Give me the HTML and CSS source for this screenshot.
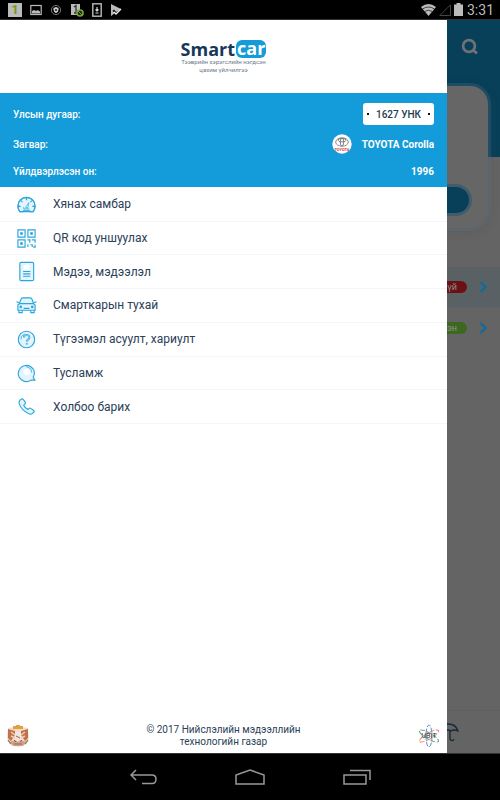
FILE: index.html
```html
<!DOCTYPE html>
<html lang="mn">
<head>
  <meta charset="UTF-8" />
  <meta name="viewport" content="width=device-width, initial-scale=1" />
  <title>Smartcar</title>
  <link rel="stylesheet" href="styles.css">
</head>
<body>
  <header class="status-bar">
    <div class="status-group">
      <span class="status-one">1</span>
      <svg width="12" height="12" viewBox="0 0 12 12"><rect x=".8" y="1.5" width="10.4" height="9" fill="none" stroke="#bbb" stroke-width="1.2"/><path d="M2 9.500V7l2-1 2 1 1.500-1L10 7.500v2z" fill="#bbb"/></svg>
      <svg width="12" height="12" viewBox="0 0 12 12"><circle cx="6" cy="6" r="4.600" fill="none" stroke="#777" stroke-width="1"/><path d="M6 3l2.500 1v2Q8.500 8 6 9.300 3.500 8 3.500 6V4z" fill="#ccc"/><circle cx="6" cy="6" r="1" fill="#111"/></svg>
      <svg width="14" height="14" viewBox="0 0 14 14"><rect x="1" y="1" width="9" height="11" fill="#bbb"/><path d="M4 4l2-1.500V10M4 10h4" fill="none" stroke="#333" stroke-width="1.300"/><circle cx="10" cy="10" r="3" fill="#222" stroke="#78a72c" stroke-width="1.600"/><path d="M8 8l4 4" stroke="#78a72c"/></svg>
      <svg width="10" height="14" viewBox="0 0 10 14"><rect x=".8" y=".8" width="8.400" height="12.400" fill="none" stroke="#bbb" stroke-width="1.400"/><path d="M5 4v4M3.500 6.500L5 8l1.500-1.500M3.500 10h3" fill="none" stroke="#ddd" stroke-width="1.100"/></svg>
      <svg width="12" height="14" viewBox="0 0 12 14"><path d="M1 1l10 5-2 1.500L6 9 4 6.500 2.500 8 5 10l-4 3z" fill="#bbb"/><path d="M4 9l2 2 5-5" fill="none" stroke="#eee" stroke-width="1.300"/></svg>
    </div>
    <div class="status-group status-right">
      <svg width="15" height="12" viewBox="0 0 15 12"><path d="M0 3Q7.500-3 15 3L7.500 12z" fill="#bbb"/><path d="M1.500 5Q7.500 1 13.500 5M3.500 7.500Q7.500 5 11.500 7.500" fill="none" stroke="#222" stroke-width=".8"/></svg>
      <svg width="12" height="12" viewBox="0 0 12 12"><path d="M11.500.8v10.700H.8z" fill="none" stroke="#444"/></svg>
      <svg width="9" height="13" viewBox="0 0 9 13"><path d="M2.500 0h4v1.500H9V13H0V1.500h2.500z" fill="#bbb"/></svg>
      <span class="clock">3:31</span>
    </div>
  </header>

  <div class="screen">
    <!-- dimmed page behind the drawer -->
    <main class="page">
      <section class="page-top">
        <button class="search" aria-label="Хайх">
          <svg width="18" height="18" viewBox="0 0 18 18"><circle cx="8" cy="8" r="5.900" fill="none" stroke="#6f7375" stroke-width="2.700"/><path d="M11.500 11.500l4.500 4" stroke="#6f7375" stroke-width="2.800"/></svg>
        </button>
        <div class="page-card"><div class="page-pill"></div></div>
      </section>
      <section class="page-list">
        <div class="page-row tinted">
          <span class="badge red">үй</span>
          <svg width="8" height="12" viewBox="0 0 8 12"><path d="M1.500 1.200l5 4.800-5 4.800" fill="none" stroke="#106b98" stroke-width="2.400"/></svg>
        </div>
        <div class="page-row">
          <span class="badge green">эн</span>
          <svg width="8" height="12" viewBox="0 0 8 12"><path d="M1.500 1.200l5 4.800-5 4.800" fill="none" stroke="#106b98" stroke-width="2.400"/></svg>
        </div>
      </section>
      <footer class="page-tabs">
        <svg width="22" height="20" viewBox="0 0 22 20"><path d="M2 9Q3 2 11 2t10 7Q17 7 14 9q-3-2-6 0-3-2-6 0zM13 9v7q0 2.500 2 2.500T17 17" fill="none" stroke="#182a38" stroke-width="1.300"/></svg>
      </footer>
    </main>

    <aside class="drawer">
      <div class="brand">
        <div class="logo">Smart<span class="logo-car">car</span></div>
        <div class="slogan">Тээврийн хэрэгслийн нэгдсэн<br>цахим үйлчилгээ</div>
      </div>

      <dl class="vehicle">
        <div class="vehicle-row plate-row">
          <dt>Улсын дугаар:</dt>
          <dd class="plate">1627 УНК</dd>
        </div>
        <div class="vehicle-row model-row">
          <dt>Загвар:</dt>
          <dd class="model">
            <svg width="20" height="20" viewBox="0 0 20 20"><circle cx="10" cy="10" r="9.700" fill="#fff"/><g fill="none" stroke="#777" stroke-width=".9"><ellipse cx="10" cy="8" rx="6.300" ry="4.200"/><ellipse cx="10" cy="6.200" rx="4" ry="1.700"/><ellipse cx="10" cy="8" rx="1.700" ry="4"/></g><text class="maker" x="10" y="16.500" text-anchor="middle">TOYOTA</text></svg>
            TOYOTA Corolla
          </dd>
        </div>
        <div class="vehicle-row year-row">
          <dt>Үйлдвэрлэсэн он:</dt>
          <dd>1996</dd>
        </div>
      </dl>

      <nav class="menu">
        <a href="#">
          <svg class="icon" viewBox="0 0 22 22"><path d="M4 18.500Q2 16 2 12.500a9 9 0 0 1 18 0q0 3.500-2 6z" fill="#e4f4fc"/><path d="M4 18.500Q2 16 2 12.500a9 9 0 0 1 18 0q0 3.500-2 6h-3.500l-1-1.500h-5l-1 1.500zM11 4v2.500M5.200 7l1.600 1.500M16.800 7l-1.600 1.500M2.500 13H5M17 13h2.500"/><path d="M10 14l3.500-5-1 5.500zM8 13.500v2h6" stroke-width=".7"/></svg>
          Хянах самбар
        </a>
        <a href="#">
          <svg class="icon" viewBox="0 0 22 22"><path d="M2 2h7.500v7.500H2zM12.500 2H20v7.500h-7.500zM2 12.500h7.500V20H2z"/><path d="M5 5h1.500v1.500H5zM15.500 5H17v1.500h-1.500zM5 15.500h1.500V17H5z" fill="#119bd8"/><path d="M12 12.500h2.500v3M12.500 17v3M16.500 12.500H20v3M15 17.500h2V20M20 17.500V20h-2"/></svg>
          QR код уншуулах
        </a>
        <a href="#">
          <svg class="icon" viewBox="0 0 22 22"><rect x="4" y="1.500" width="14.500" height="19" rx="1.500" fill="#e4f4fc"/><path d="M8 4h6v5H8z" fill="#fff" stroke="none"/><path d="M7.500 11h7.500M7.500 13.500h7.500M7.500 16h7.500"/></svg>
          Мэдээ, мэдээлэл
        </a>
        <a href="#">
          <svg class="icon" viewBox="0 0 22 22"><path d="M3.500 9L5.200 4.500Q5.700 3 7 3h8q1.300 0 1.800 1.500L18.500 9l1.500 1.500V16H2v-5.500z" fill="#e4f4fc"/><path d="M3.500 9h15M3.500 8.200L.5 7M18.500 8.200l3-1.200M3 16v2.500h3.500V16M15.500 16v2.500H19V16M8 14h6"/><circle cx="5" cy="12.500" r=".8"/><circle cx="17" cy="12.500" r=".8"/></svg>
          Смарткарын тухай
        </a>
        <a href="#">
          <svg class="icon" viewBox="0 0 22 22"><circle cx="11" cy="11" r="8.600" fill="#e4f4fc"/><path d="M5 11a6 6 0 0 1 4-5.600" stroke-width=".8"/><path d="M8.300 9q0-2.800 2.900-2.800T14 9q0 1.500-1.500 2.200-1.200.6-1.200 2.200M11.300 15v1.300" stroke-width="2"/><path d="M8.300 9q0-2.800 2.900-2.800T14 9q0 1.500-1.500 2.200-1.200.6-1.200 2.200" stroke="#d5effb" stroke-width=".6"/></svg>
          Түгээмэл асуулт, хариулт
        </a>
        <a href="#">
          <svg class="icon" viewBox="0 0 22 22"><path d="M19.800 19h-4A8.500 8.500 0 1 1 19.300 11q0 3-1.300 5z" fill="#e4f4fc"/><circle cx="11" cy="10.500" r="3.200" fill="#fff" stroke="none"/><path d="M10.500 5a6 6 0 0 1 6 6" stroke-width=".9"/></svg>
          Тусламж
        </a>
        <a href="#">
          <svg class="icon" viewBox="0 0 22 22"><path d="M4 4.500l2-1.300q1-.5 1.700.5l2 3q.5 1-.4 1.800L8 9.700q1.300 2.700 4.300 4.500l1.500-1.200q.8-.6 1.600 0l3.200 2.200q.9.800.2 1.600L17 18.500q-1.300 1-4-.2Q6 15 3.500 8.500 2.500 6 4 4.500z" fill="#e4f4fc"/></svg>
          Холбоо барих
        </a>
      </nav>

      <footer class="drawer-footer">
        <svg width="24" height="24" viewBox="0 0 24 24">
          <path d="M2 4l7-1 3-2 3 2 7 1 1 10-4 7-7 2-7-2-4-7z" fill="#f0ddd0"/>
          <path d="M2 5l7 2v4l-4 6-3-3zM22 5l-7 2v4l4 6 3-3z" fill="#c4704a"/>
          <path d="M7 2h3v3H7zM14 2h3v3h-3zM10 1h4v4h-4z" fill="#e5a03a"/>
          <path d="M5 8l4 3M19 8l-4 3M5 12l4 2M19 12l-4 2" stroke="#e7d3b4" stroke-width="1.500"/>
          <path d="M9 8h6v6l-3 3-3-3z" fill="#eee7df"/>
          <path d="M4 18l5-2 3 2 3-2 5 2-3 4H7z" fill="#dd9890"/>
          <path d="M2 16l3 4M22 16l-3 4M8 20h8" stroke="#87915d" stroke-width="1.500"/>
          <path d="M10 12l4 2M8 16l2 2M16 16l-2 2" stroke="#b0574d"/>
        </svg>
        <p>© 2017 Нийслэлийн мэдээллийн<br>технологийн газар</p>
        <svg width="24" height="24" viewBox="0 0 24 24">
          <g fill="none" stroke-width="1" stroke-dasharray="5 1.500">
            <ellipse cx="12" cy="12" rx="3" ry="11" stroke="#638ec1"/>
            <ellipse cx="12" cy="12" rx="3" ry="11" transform="rotate(60 12 12)" stroke="#e58273"/>
            <ellipse cx="12" cy="12" rx="3" ry="11" transform="rotate(120 12 12)" stroke="#64a889"/>
          </g>
          <text class="ubit" x="12" y="14" text-anchor="middle">UBIT</text>
        </svg>
      </footer>
    </aside>
  </div>

  <div class="nav-bar">
    <button aria-label="Буцах"><svg width="28" height="16" viewBox="0 0 28 16"><path d="M7 1L2 6l5 5M2 6h21q4 0 4 4.300T23 14.500H13"/></svg></button>
    <button aria-label="Нүүр"><svg width="30" height="16" viewBox="0 0 30 16"><path d="M1 15V6l14-5 14 5v9z"/></svg></button>
    <button aria-label="Сүүлийн апп"><svg width="28" height="16" viewBox="0 0 28 16"><path d="M1 6h22v9H1zM7 1.500h20V11"/></svg></button>
  </div>
</body>
</html>
```

FILE: styles.css
```css
* {
  box-sizing: border-box;
}

body {
  margin: 0;
  height: 100vh;
  display: flex;
  flex-direction: column;
  overflow: hidden;
  background: #000;
  color: #2b4158;
  font-family: Roboto, "Noto Sans", sans-serif;
}

svg {
  display: block;
  flex: none;
}

button {
  padding: 0;
  border: none;
  background: none;
}

/* status bar */
.status-bar {
  height: 20px;
  padding: 0 6px 0 8px;
  display: flex;
  align-items: center;
  justify-content: space-between;
  border-bottom: 1px solid #333;
}

.status-group {
  display: flex;
  align-items: center;
  gap: 8px;
}

.status-right {
  gap: 3px;
}

.status-one {
  width: 14px;
  height: 14px;
  background: #bbb;
  color: #6c9a1b;
  font-size: 13px;
  line-height: 14px;
  font-weight: 700;
  text-align: center;
}

.clock {
  margin-left: 1px;
  color: #bbb;
  font-size: 14px;
  line-height: 18px;
}

.screen {
  flex: 1;
  position: relative;
}

/* page */
.page {
  height: 100%;
  display: flex;
  flex-direction: column;
  background: #646464;
}

.page-top {
  height: 247px;
  padding: 18px 12px 0;
  display: flex;
  flex-direction: column;
  align-items: flex-end;
  gap: 30px;
  background: linear-gradient(#083f59 137px, transparent 137px);
}

.search {
  margin-right: 9px;
}

.page-card {
  width: 100%;
  height: 142px;
  padding: 0 16px 12px;
  display: flex;
  align-items: flex-end;
  border-radius: 18px;
  background: #666;
  box-shadow: 0 0 0 3px rgba(80, 120, 145, .25), 0 2px 8px 3px rgba(70, 70, 70, .2);
}

.page-pill {
  width: 100%;
  height: 32px;
  border: 3px solid #405d6d;
  border-radius: 16px;
  background: #083f59;
}

.page-row {
  height: 41px;
  padding: 0 13px;
  display: flex;
  align-items: center;
  justify-content: flex-end;
  gap: 12px;
  border-bottom: 1px solid #606365;
}

.page-row.tinted {
  background: #5a6165;
}

.badge {
  width: 40px;
  padding-right: 10px;
  border-radius: 6px;
  color: #8f8f8f;
  font-size: 9px;
  line-height: 12px;
  text-align: right;
}

.red {
  background: #6b1115;
}

.green {
  background: #3c6822;
}

.page-tabs {
  height: 43px;
  margin-top: auto;
  padding: 11px 41px;
  display: flex;
  justify-content: flex-end;
  border-top: 1px solid #5f5f5f;
}

/* drawer */
.drawer {
  position: absolute;
  inset: 0 53px 0 0;
  display: flex;
  flex-direction: column;
  background: #fff;
}

.brand {
  height: 73px;
  padding-top: 20px;
  display: flex;
  flex-direction: column;
  align-items: center;
}

.logo {
  display: flex;
  align-items: center;
  gap: 1px;
  color: #17375a;
  font: 700 18px/18px "Open Sans", sans-serif;
}

.logo-car {
  height: 18px;
  padding: 0 1px;
  border-radius: 6px;
  background: #149bd8;
  color: #fff;
  line-height: 16px;
}

.slogan {
  color: #6a7a8a;
  font-size: 6px;
  line-height: 8px;
  text-align: center;
}

.vehicle {
  margin: 0;
  padding: 10px 13px 8px;
  display: flex;
  flex-direction: column;
  gap: 9px;
  background: #149bd9;
  color: #fff;
  font-size: 10px;
  font-weight: 500;
}

.vehicle-row {
  display: flex;
  align-items: center;
  justify-content: space-between;
}

.vehicle dd {
  margin: 0;
  font-weight: 700;
}

.plate-row {
  height: 22px;
}

.model-row {
  height: 20px;
}

.year-row {
  height: 16px;
}

.vehicle .plate {
  width: 71px;
  height: 22px;
  padding: 0 4px;
  display: flex;
  align-items: center;
  justify-content: space-between;
  border-radius: 3px;
  background: #fff;
  color: #243b53;
  font-weight: 500;
}

.plate::before,
.plate::after {
  content: "";
  width: 2px;
  height: 2px;
  background: #111;
}

.model {
  display: flex;
  align-items: center;
  gap: 10px;
}

.maker {
  fill: #e0393e;
  font-size: 4px;
}

.menu {
  height: 237px;
  padding-top: 1px;
  display: grid;
  grid-auto-rows: 1fr;
}

.menu a {
  padding-left: 16px;
  display: flex;
  align-items: center;
  gap: 16px;
  border-bottom: 1px solid #f0f6f9;
  color: #2b4158;
  font-size: 12px;
  text-decoration: none;
}

.icon {
  width: 21px;
  height: 21px;
  fill: none;
  stroke: #2ba6dc;
  stroke-width: 1.2;
}

.drawer-footer {
  margin-top: auto;
  padding: 0 6px 5px;
  display: flex;
  align-items: center;
  justify-content: space-between;
}

.drawer-footer p {
  margin: 0;
  font-size: 10px;
  line-height: 12px;
  text-align: center;
}

.ubit {
  fill: #334;
  font-size: 7px;
}

/* system navigation */
.nav-bar {
  height: 47px;
  display: flex;
  align-items: center;
  justify-content: center;
  gap: 78px;
  border-top: 1px solid #333;
}

.nav-bar svg {
  fill: none;
  stroke: #999;
  stroke-width: 1.5;
}
```
